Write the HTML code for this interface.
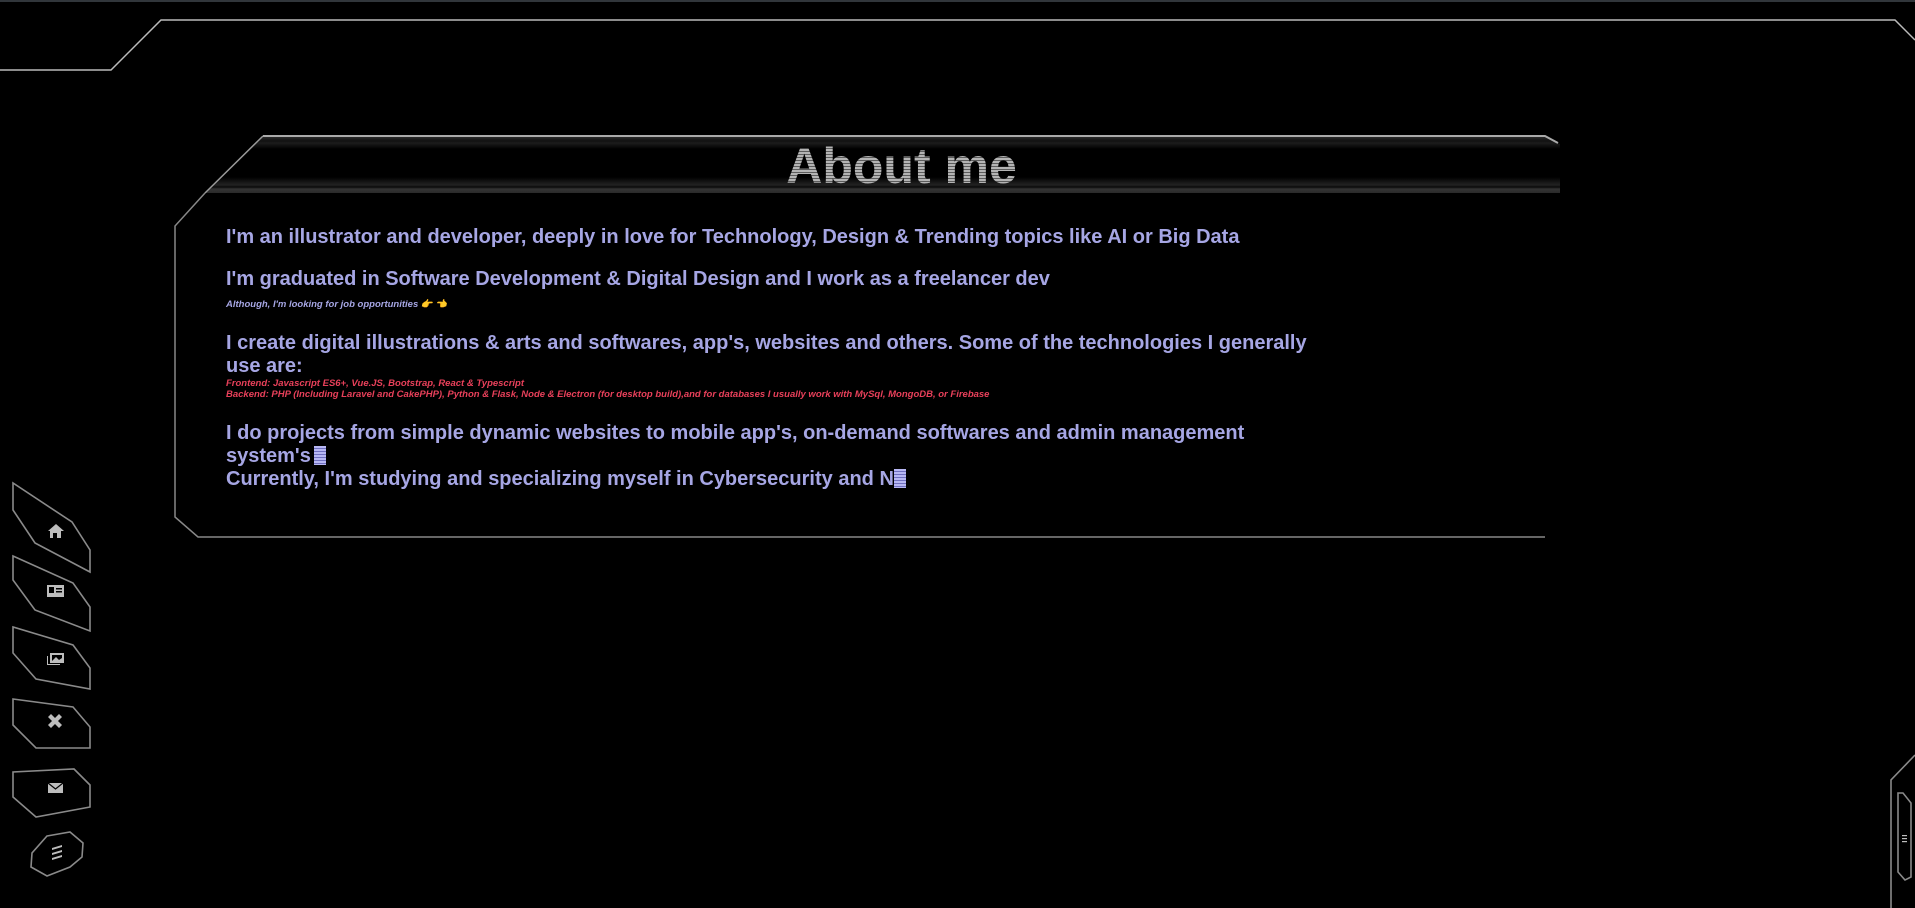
<!DOCTYPE html>
<html><head><meta charset="utf-8"><style>
html,body{margin:0;padding:0;background:#000;width:1915px;height:908px;overflow:hidden;font-family:"Liberation Sans",Arial,sans-serif}
.topbar{position:absolute;left:0;top:0;width:1915px;height:2px;background:#31363b}
svg.frame{position:absolute;left:0;top:0}
.header{position:absolute;left:205px;top:137px;width:1355px;height:56px;clip-path:polygon(58px 0,1340px 0,1355px 7px,1355px 56px,0 56px);
background:linear-gradient(#2a2a2a 0,#111 4px,#1c1c1c 6px,#000 12px,#000 40px,#111 44px,#222 48px,#0a0a0a 50px,#333 52px,#2a2a2a 56px)}
.title{position:absolute;left:0;width:1915px;top:137px;text-align:center;font-weight:bold;font-size:50px;line-height:58px;
background:repeating-linear-gradient(#b4b4b4 0 2px,#5c5c5c 2px 3px);-webkit-background-clip:text;background-clip:text;color:transparent}
.title span{margin-left:-112px}
.t{position:absolute;left:226px;width:1100px;color:#a6a6e4;font-weight:bold;font-size:20px;line-height:23px;margin:0}
.s{position:absolute;left:226px;font-weight:bold;font-style:italic;font-size:9.5px;line-height:12px}
.cur{display:inline-block;width:12px;height:19px;background:repeating-linear-gradient(#b8b8f4 0 2px,#7070c0 2px 3px);vertical-align:-3px;margin-left:3px}
</style></head><body>
<div class="topbar"></div>
<div class="header"></div>
<div class="title"><span>About me</span></div>
<svg class="frame" width="1915" height="908" fill="none" stroke="#9a9a9a" stroke-width="1.5">
<polyline points="0,70 111,70 161,20 1895,20 1915,40" stroke="#bbb"/>
<polyline points="263,136 1545,136 1558,143" stroke="#aaa" stroke-width="2"/>
<line x1="263" y1="136" x2="205" y2="193"/>
<polyline points="205,193 175,226 175,517 198,537 1545,537" stroke="#888"/>
<g stroke="#8a8a8a" stroke-width="1.6">
<polygon points="13,483 13,510 35,543 90,572 90,550 72,522"/>
<polygon points="13,556 13,580 35,610 90,631 90,607 73,583"/>
<polygon points="13,627 13,653 36,679 90,689 90,668 73,645"/>
<polygon points="13,699 13,725 36,748 90,748 90,727 73,707"/>
<polygon points="13,772 13,797 36,817 90,807 90,785 74,769"/>
<polygon points="47,836 70,832 83,843 82,857 70,867 47,876 31,867 32,853"/>
<polyline points="1891,908 1891,780 1915,755"/>
<polygon points="1898,793 1903,793 1911,803 1911,877 1905,880 1898,872"/>
</g>
<g stroke="none" fill="#bdbdbd">
<path d="M48 531 L56 524 L64 531 L61 531 L61 538 L57 538 L57 533 L53 533 L53 538 L50 538 L50 531Z"/>
<rect x="47" y="585" width="17" height="12"/>
<rect x="49" y="587" width="5" height="6" fill="#000"/>
<rect x="56" y="588" width="6" height="1.5" fill="#000"/><rect x="56" y="591" width="6" height="1.5" fill="#000"/>
<rect x="50" y="653" width="14" height="10"/>
<rect x="52" y="655" width="10" height="6" fill="#000"/>
<path d="M52 661 L56 657 L59 660 L62 658 L62 661Z"/>
<path d="M47 656 L47 665 L60 665 L60 664 L48 664 L48 656Z"/>
<path d="M48 717 L51 714 L62 725 L59 728Z M59 714 L62 717 L51 728 L48 725Z"/>
<rect x="48" y="783" width="15" height="10"/>
<path d="M48 783 L55.5 789 L63 783" stroke="#000" stroke-width="1.2" fill="none"/>
<path d="M52 848 L62 845 L62 847 L52 850Z M52 853 L62 850 L62 852 L52 855Z M52 858 L62 855 L62 857 L52 860Z"/>
<rect x="1902" y="835" width="5" height="1.2"/><rect x="1902" y="838" width="5" height="1.2"/><rect x="1902" y="841" width="5" height="1.2"/>
</g>
</svg>
<p class="t" style="top:226px">I'm an illustrator and developer, deeply in love for Technology, Design &amp; Trending topics like AI or Big Data</p>
<p class="t" style="top:268px">I'm graduated in Software Development &amp; Digital Design and I work as a freelancer dev</p>
<div class="s" style="top:299px;color:#a6a6e4">Although, I'm looking for job opportunities <span style="color:#d8a060">👉 👈</span></div>
<p class="t" style="top:332px">I create digital illustrations &amp; arts and softwares, app's, websites and others. Some of the technologies I generally use are:</p>
<div class="s" style="top:378px;color:#e8405a">Frontend: Javascript ES6+, Vue.JS, Bootstrap, React &amp; Typescript</div>
<div class="s" style="top:389px;color:#e8405a">Backend: PHP (Including Laravel and CakePHP), Python &amp; Flask, Node &amp; Electron (for desktop build),and for databases I usually work with MySql, MongoDB, or Firebase</div>
<p class="t" style="top:422px">I do projects from simple dynamic websites to mobile app's, on-demand softwares and admin management system's<span class="cur"></span><br>Currently, I'm studying and specializing myself in Cybersecurity and N<span class="cur" style="margin-left:0"></span></p>
</body></html>
